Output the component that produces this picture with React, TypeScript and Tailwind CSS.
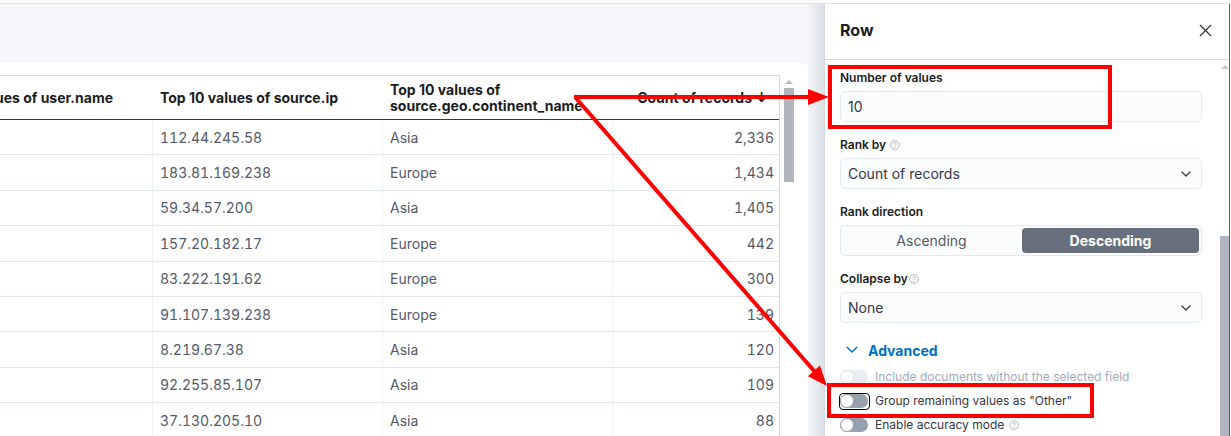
import React from "react";

const rows: [string, string, string][] = [
  ["112.44.245.58", "Asia", "2,336"],
  ["183.81.169.238", "Europe", "1,434"],
  ["59.34.57.200", "Asia", "1,405"],
  ["157.20.182.17", "Europe", "442"],
  ["83.222.191.62", "Europe", "300"],
  ["91.107.139.238", "Europe", "139"],
  ["8.219.67.38", "Asia", "120"],
  ["92.255.85.107", "Asia", "109"],
  ["37.130.205.10", "Asia", "88"],
];

function Help() {
  return (
    <svg width="10" height="10" viewBox="0 0 16 16" className="inline-block">
      <circle cx="8" cy="8" r="7" fill="none" stroke="#98a2b3" strokeWidth="1.2" />
      <path d="M5.9 6.2a2.1 2.1 0 1 1 3 1.9c-.6.3-.9.7-.9 1.3v.5" fill="none" stroke="#98a2b3" strokeWidth="1.2" />
      <circle cx="8" cy="12" r=".9" fill="#98a2b3" />
    </svg>
  );
}

function Chevron({ color = "#343741", w = 10 }: { color?: string; w?: number }) {
  return (
    <svg width={w} height={w * 0.6} viewBox="0 0 10 6">
      <path d="M1 1l4 4 4-4" fill="none" stroke={color} strokeWidth="1.2" strokeLinecap="round" strokeLinejoin="round" />
    </svg>
  );
}

function Toggle({ kind, label, help }: { kind: "disabled" | "focus" | "normal"; label: string; help?: boolean }) {
  const track = kind === "disabled" ? "bg-[#e9edf3]" : "bg-[#98a1ae]";
  const knob = kind === "disabled" ? "border-[#dfe4ec]" : "border-[#98a1ae]";
  const sw = (
    <span className={`relative block w-[28px] h-[14px] rounded-full ${track}`}>
      <span className={`absolute left-0 top-0 w-[14px] h-[14px] rounded-full bg-white border ${knob}`} />
    </span>
  );
  return (
    <div className="h-[24px] flex items-center">
      {kind === "focus" ? (
        <span className="flex items-center w-[31px] h-[17px] rounded-[4px] border border-black -ml-[1px]">
          {sw}
        </span>
      ) : (
        <span className="w-[30px]">{sw}</span>
      )}
      <span
        className={`ml-[5px] text-[12px] ${kind === "disabled" ? "text-[#a2abba]" : "text-[#343741]"} flex items-center gap-[5px]`}
      >
        {label}
        {help && <Help />}
      </span>
    </div>
  );
}

function Label({ children }: { children: React.ReactNode }) {
  return (
    <div className="h-4 leading-4 text-[12px] font-semibold text-[#1a1c21] flex items-center gap-[4px]">
      {children}
    </div>
  );
}

function Select({ value }: { value: string }) {
  return (
    <div className="mt-[5px] h-[31px] w-[362px] rounded-[5px] border border-[#e6eaf1] bg-[#fbfcfd] flex items-center justify-between pl-[7px] pr-[10px] text-[14px] text-[#343741]">
      <span>{value}</span>
      <Chevron />
    </div>
  );
}

export default function App() {
  return (
    <div
      className="relative w-[1231px] h-[436px] overflow-hidden bg-white"
      style={{ fontFamily: "Inter, 'Noto Sans', sans-serif" }}
    >
      <div className="h-[3px]" />
      <div className="flex h-[433px] border-t border-[#d9dee8]">
        {/* main */}
        <div className="w-[808px] flex flex-col bg-[#f5f7fa]">
          <div className="h-[59px] shrink-0" />
          <div className="flex-1 bg-white rounded-tr-[6px] pt-[12px] flex">
            <div className="w-[780px] overflow-hidden border-t border-r border-[#d3dae6] self-start">
              <div className="-ml-[80px]">
                <div className="grid grid-cols-[233px_230px_230px_167px] h-[44px] border-b border-[#343741] text-[14px] font-bold text-[#1a1c21] leading-4">
                  <div className="px-[7px] flex items-center whitespace-nowrap">Top 10 values of user.name</div>
                  <div className="px-[7px] flex items-center whitespace-nowrap">Top 10 values of source.ip</div>
                  <div className="px-[7px] flex items-center">Top 10 values of source.geo.continent_name</div>
                  <div className="pr-[12px] flex items-center justify-end whitespace-nowrap">Count of records ↓</div>
                </div>
                {rows.map((r, i) => (
                  <div
                    key={i}
                    className="grid grid-cols-[233px_230px_230px_167px] h-[35.4px] border-b border-[#e3e8f0] text-[14px] text-[#535966] tabular-nums"
                  >
                    <div className="border-r border-[#eef1f6]" />
                    <div className="px-[7px] flex items-center border-r border-[#eef1f6]">{r[0]}</div>
                    <div className="px-[7px] flex items-center border-r border-[#eef1f6]">{r[1]}</div>
                    <div className="pr-[6px] flex items-center justify-end">{r[2]}</div>
                  </div>
                ))}
              </div>
            </div>
            <div className="w-[28px] flex flex-col pl-[4px] pt-[5px]">
              <div className="w-[10px] flex justify-center">
                <div className="w-0 h-0 border-l-[4px] border-r-[4px] border-b-[4px] border-l-transparent border-r-transparent border-b-[#b7bbc3]" />
              </div>
              <div className="mt-[4px] w-[10px] h-[94px] bg-[#b1b5bd]" />
            </div>
          </div>
        </div>
        {/* shadow strip */}
        <div className="w-[16px] bg-gradient-to-r from-[#f3f5f8] to-[#dcdfe6]" />
        {/* flyout */}
        <div className="w-[406px] flex flex-col border-l border-r border-l-[#d3dae6] border-r-[#5f6066] bg-white">
          <div className="h-[56px] shrink-0 border-b border-[#d3dae6] flex items-center justify-between pl-[15px] pr-[17px] pb-[3px]">
            <span className="text-[16px] font-bold text-[#1a1c21]">Row</span>
            <svg width="13" height="13" viewBox="0 0 13 13">
              <path d="M1 1l11 11M12 1L1 12" stroke="#343741" strokeWidth="1.2" />
            </svg>
          </div>
          <div className="flex-1 flex">
            <div className="flex-1 pl-[15px] pt-[10px]">
              <Label>Number of values</Label>
              <div className="mt-[5px] h-[31px] w-[362px] rounded-[5px] border border-[#e6eaf1] bg-[#fbfcfd] flex items-center pl-[7px] text-[14px] text-[#343741]">
                10
              </div>
              <div className="mt-[15px]">
                <Label>
                  Rank by <Help />
                </Label>
                <Select value="Count of records" />
              </div>
              <div className="mt-[15px]">
                <Label>Rank direction</Label>
                <div className="mt-[5px] h-[31px] w-[362px] rounded-[5px] border border-[#e3e8f0] bg-[#fbfcfd] p-[2px] flex gap-[2px] text-[14px]">
                  <div className="flex-1 flex items-center justify-center text-[#535966]">Ascending</div>
                  <div className="flex-1 flex items-center justify-center rounded-[4px] bg-[#69707d] text-white font-bold">
                    Descending
                  </div>
                </div>
              </div>
              <div className="mt-[15px]">
                <Label>
                  <span className="flex items-center gap-[1px]">
                    Collapse by<Help />
                  </span>
                </Label>
                <Select value="None" />
              </div>
              <div className="mt-[15px] h-[24px] flex items-center pl-[6px] gap-[10px] text-[14px] font-bold text-[#0071c2]">
                <Chevron color="#0071c2" w={12} />
                <span>Advanced</span>
              </div>
              <div className="mt-[3px]">
                <Toggle kind="disabled" label="Include documents without the selected field" />
                <Toggle kind="focus" label={'Group remaining values as "Other"'} />
                <Toggle kind="normal" label="Enable accuracy mode" help />
              </div>
            </div>
            <div className="w-[9px] flex flex-col items-center">
              <div className="mt-[5px] w-0 h-0 border-l-[4px] border-r-[4px] border-b-[4px] border-l-transparent border-r-transparent border-b-[#c3c6cc]" />
              <div className="mt-auto w-[9px] h-[201px] bg-[#b1b5bd]" />
            </div>
          </div>
        </div>
      </div>

      {/* annotations */}
      <svg className="absolute inset-0 pointer-events-none" width="1231" height="436" viewBox="0 0 1231 436">
        <rect x="830" y="67" width="280" height="60" fill="none" stroke="#ff0000" strokeWidth="4" />
        <rect x="829" y="385" width="263" height="31" fill="none" stroke="#ff0000" strokeWidth="4" />
        <line x1="574" y1="97" x2="810" y2="97" stroke="#ff0000" strokeWidth="4" />
        <polygon points="829,97 808,89 808,105" fill="#ff0000" />
        <line x1="575" y1="97" x2="815" y2="372" stroke="#ff0000" strokeWidth="4" />
        <polygon points="827,386 807.9,376.2 819.9,365.6" fill="#ff0000" />
      </svg>
    </div>
  );
}
